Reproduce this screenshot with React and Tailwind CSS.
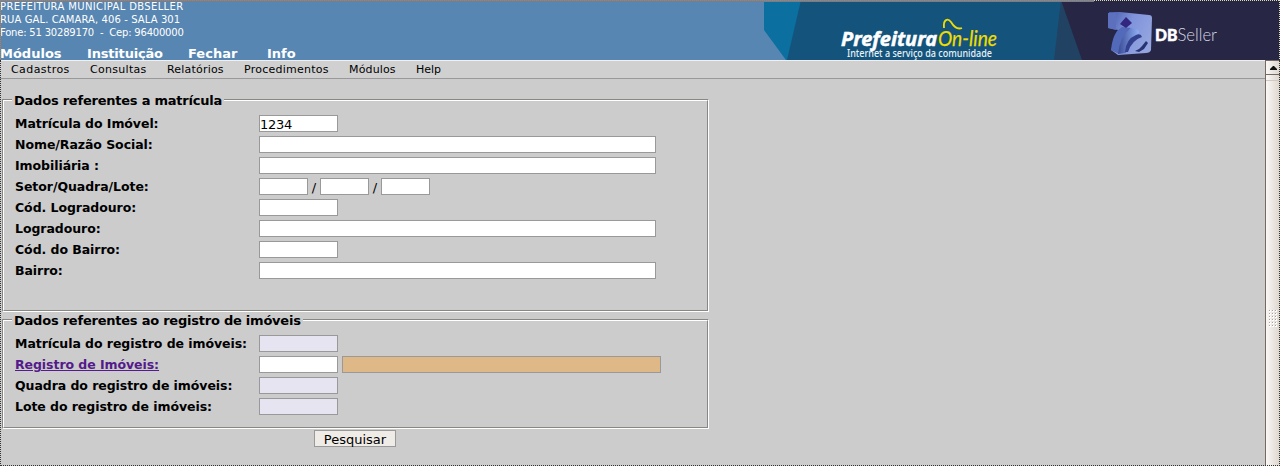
const FIELD = "h-[17px] border border-[#999] block";

function Field({ w = "w-[79px]", bg = "bg-white", children }) {
  return <div className={`${FIELD} ${w} ${bg} text-[13px] leading-[18px] tracking-[-0.3px] whitespace-nowrap`}>{children}</div>;
}

function Row({ label, link, children }) {
  return (
    <div className="flex h-[21px] items-start">
      <div className="w-[244px] shrink-0 whitespace-nowrap text-[12.5px] font-bold leading-[17px] tracking-[-0.06px]">
        {link ? <a className="text-[#551a8b] underline">{label}</a> : label}
      </div>
      {children}
    </div>
  );
}

function Group({ title, titleWidth, height, children }) {
  return (
    <section className={`${height} flex w-[707px] flex-col`}>
      <div className="flex h-[13px] shrink-0 items-start">
        <div className="mt-[6px] h-[7px] w-[10px] border-l border-t border-[#888883]"><div className="h-full border-l border-t border-white" /></div>
        <h2 className={`${titleWidth} shrink-0 whitespace-nowrap pl-[2px] text-[13px] font-bold leading-[15px] tracking-[-0.23px]`}>{title}</h2>
        <div className="mt-[6px] h-[7px] grow border-r border-t border-r-white border-t-[#888883]"><div className="h-full border-r border-t border-r-[#888883] border-t-white" /></div>
      </div>
      <div className="flex grow flex-col border-b border-l border-r border-b-white border-l-[#888883] border-r-white">
        <div className="grow border-b border-l border-r border-b-[#888883] border-l-white border-r-[#888883] pl-[11px] pt-[9px]">{children}</div>
      </div>
    </section>
  );
}

function Banner() {
  return (
    <svg className="block h-[60px] w-[516px] shrink-0" viewBox="764 0 516 60">
      <defs>
        <linearGradient id="cube" x1="0" y1="0" x2="1" y2=".5">
          <stop offset="0" stopColor="#4257a8" /><stop offset=".5" stopColor="#7f93dc" /><stop offset="1" stopColor="#93a4de" />
        </linearGradient>
        <linearGradient id="side" x1="0" y1="0" x2="1" y2="0">
          <stop offset="0" stopColor="#3a4b96" /><stop offset="1" stopColor="#8fb0f6" />
        </linearGradient>
        <filter id="soft"><feGaussianBlur stdDeviation=".5" /></filter>
      </defs>
      <rect x="764" width="516" height="60" fill="#14547c" />
      <path d="M764 0H801L787 60H764Z" fill="#0b6f9f" />
      <path d="M764 30L786 60H764Z" fill="#5786b2" />
      <path d="M1061 0H1090V60H1054Z" fill="#214262" />
      <path d="M1061 0H1280V60H1082Z" fill="#272645" />
      <rect x="764" width="330" height="2" fill="#5786b2" />
      <text x="841" y="46" fontFamily="Noto Sans, sans-serif" fontWeight="700" fontStyle="italic" fontSize="19.5" textLength="96" lengthAdjust="spacingAndGlyphs" fill="#fff" stroke="#fff" strokeWidth=".5">Prefeitura</text>
      <text x="938" y="46" fontFamily="Lato, sans-serif" fontStyle="italic" fontSize="21.5" textLength="59" lengthAdjust="spacingAndGlyphs" fill="#f0dd00" stroke="#f0dd00" strokeWidth=".25">On-line</text>
      <path d="M944 28C943 19 948 18 951 22C954 27 957 30 962 28" fill="none" stroke="#f0dd00" strokeWidth="1.8" />
      <text x="847" y="57" fontFamily="Noto Sans, sans-serif" fontWeight="500" fontSize="10" textLength="145" lengthAdjust="spacingAndGlyphs" fill="#e7f1f6">Internet a serviço da comunidade</text>
      <g filter="url(#soft)">
        <path d="M1109 12H1120L1149 15Q1152 15 1152 18L1151 50Q1150 53 1146 53L1118 55L1111 50L1118 30L1108 28Z" fill="url(#cube)" />
        <path d="M1108 13L1116 13V30L1108 28Z" fill="#5c70bd" />
        <path d="M1108 29L1118 31Q1112 38 1111 50L1108 50Z" fill="#272645" />
        <path d="M1117 31L1122 27L1131 28Q1123 35 1119 54L1111 50Q1112 38 1117 31Z" fill="#5269ba" />
        <path d="M1131 28Q1140 29 1139 33Q1128 38 1126 53L1118 54Q1120 36 1131 28Z" fill="url(#side)" />
        <path d="M1126 17L1132 23L1126 28L1120 24Z" fill="#30267e" />
        <path d="M1125 52Q1126 39 1136 35Q1141 33 1142 37Q1132 40 1128 52Z" fill="#31418d" />
        <path d="M1135 51Q1139 50 1142 46L1146 41L1148 43L1144 49L1139 52Z" fill="#273373" />
      </g>
      <text x="1155" y="41" fontFamily="Lato, sans-serif" fontWeight="900" fontSize="17.5" textLength="22.5" lengthAdjust="spacingAndGlyphs" fill="#fff" stroke="#fff" strokeWidth=".5">DB</text>
      <text x="1177.5" y="41" fontFamily="Lato, sans-serif" fontWeight="300" fontSize="17.5" textLength="39.5" lengthAdjust="spacingAndGlyphs" fill="#d7d7e2">Seller</text>
    </svg>
  );
}

function Scrollbar() {
  return (
    <div className="flex w-[15px] shrink-0 flex-col border-l border-[#756a61] bg-gradient-to-r from-[#faf8f6] to-[#ddd5cd]">
      <div className="flex h-[15px] shrink-0 items-center justify-center border-b border-t border-[#756a61]">
        <svg className="h-[4px] w-[7px]" viewBox="0 0 7 4"><path d="M3 0H4L7 3V4H0V3Z" fill="#111" /></svg>
      </div>
      <div className="h-[6px] shrink-0 border-b border-[#d0c8c1]" />
      <div className="mt-[229px] flex justify-center">
        <svg className="h-[18px] w-[9px]" viewBox="0 0 9 18">
          {[0, 3, 6, 9, 12, 15].map((y) => [0, 3, 6].map((x) => (
            <g key={`${x}-${y}`}><rect x={x} y={y} width="2" height="2" fill="#fff" /><rect x={x} y={y} width="1" height="1" fill="#aaa29b" /></g>
          )))}
        </svg>
      </div>
    </div>
  );
}

export default function App() {
  return (
    <div className="relative flex h-[466px] w-[1280px] flex-col overflow-hidden bg-[#ccc] font-['DejaVu_Sans',sans-serif] text-black">
      <header className="flex h-[60px] shrink-0 bg-[#5786b2] text-white">
        <div className="flex w-[764px] flex-col">
          <div className="whitespace-pre text-[10px] leading-[13px]">
            <div className="tracking-[0.36px]">PREFEITURA MUNICIPAL DBSELLER</div>
            <div className="tracking-[0.1px]">RUA GAL. CAMARA, 406 - SALA 301</div>
            <div className="tracking-[-0.2px]">Fone: 51 30289170  -  Cep: 96400000</div>
          </div>
          <nav className="mt-[6px] flex text-[13px] font-bold leading-[17px]">
            <span className="w-[87px]">Módulos</span><span className="w-[101px] tracking-[-0.18px]">Instituição</span><span className="w-[79px]">Fechar</span><span>Info</span>
          </nav>
        </div>
        <Banner />
      </header>
      <div className="flex grow">
        <main className="flex w-[1265px] flex-col">
          <nav className="flex h-[19px] shrink-0 border-b border-t border-b-[#999] border-t-[#f0f0f0] bg-[#d0d0d0] pl-[11px] text-[11px] leading-[17px]">
            <span className="w-[79px] tracking-[0.42px]">Cadastros</span><span className="w-[77px] tracking-[0.3px]">Consultas</span><span className="w-[77px] tracking-[0.2px]">Relatórios</span><span className="w-[105px] tracking-[0.25px]">Procedimentos</span><span className="w-[67px] tracking-[0.15px]">Módulos</span><span>Help</span>
          </nav>
          <div className="flex flex-col pl-[2px] pt-[14px]">
            <Group title="Dados referentes a matrícula" titleWidth="w-[212px]" height="h-[219px]">
              <Row label="Matrícula do Imóvel:"><Field>1234</Field></Row>
              <Row label="Nome/Razão Social:"><Field w="w-[397px]" /></Row>
              <Row label="Imobiliária :"><Field w="w-[397px]" /></Row>
              <Row label="Setor/Quadra/Lote:">
                <Field w="w-[49px]" /><span className="w-[12px] text-center text-[13px] leading-[19px]">/</span>
                <Field w="w-[49px]" /><span className="w-[12px] text-center text-[13px] leading-[19px]">/</span>
                <Field w="w-[49px]" />
              </Row>
              <Row label="Cód. Logradouro:"><Field /></Row>
              <Row label="Logradouro:"><Field w="w-[397px]" /></Row>
              <Row label="Cód. do Bairro:"><Field /></Row>
              <Row label="Bairro:"><Field w="w-[397px]" /></Row>
            </Group>
            <div className="h-[1px]" />
            <Group title="Dados referentes ao registro de imóveis" titleWidth="w-[291px]" height="h-[116px]">
              <Row label="Matrícula do registro de imóveis:"><Field bg="bg-[#e6e4f1]" /></Row>
              <Row label="Registro de Imóveis:" link><Field /><div className="w-[4px]" /><Field w="w-[319px]" bg="bg-[#deb887]" /></Row>
              <Row label="Quadra do registro de imóveis:"><Field bg="bg-[#e6e4f1]" /></Row>
              <Row label="Lote do registro de imóveis:"><Field bg="bg-[#e6e4f1]" /></Row>
            </Group>
            <button className="ml-[312px] mt-[1px] h-[17px] w-[82px] border border-[#999] bg-[#efebe7] text-[13px] leading-[17px]">Pesquisar</button>
          </div>
        </main>
        <Scrollbar />
      </div>
      <div className="pointer-events-none absolute left-0 top-0 h-px w-[1094px] bg-[repeating-linear-gradient(90deg,#c8783a_0px,#c8783a_1px,#857f80_1px,#857f80_2px)]" />
      <div className="pointer-events-none absolute left-0 top-0 h-[60px] w-px bg-[repeating-linear-gradient(180deg,#c8783a_0px,#c8783a_1px,#5786b2_1px,#5786b2_2px)]" />
      <div className="pointer-events-none absolute right-0 top-0 h-px w-[186px] bg-[repeating-linear-gradient(90deg,#dcdcb4_0px,#dcdcb4_1px,#272645_1px,#272645_2px)]" />
      <div className="pointer-events-none absolute right-0 top-0 h-[60px] w-px bg-[repeating-linear-gradient(180deg,#dcdcb4_0px,#dcdcb4_1px,#272645_1px,#272645_2px)]" />
      <div className="pointer-events-none absolute inset-x-0 bottom-0 top-[60px] border-b border-l border-r border-dotted border-[#333]" />
    </div>
  );
}
